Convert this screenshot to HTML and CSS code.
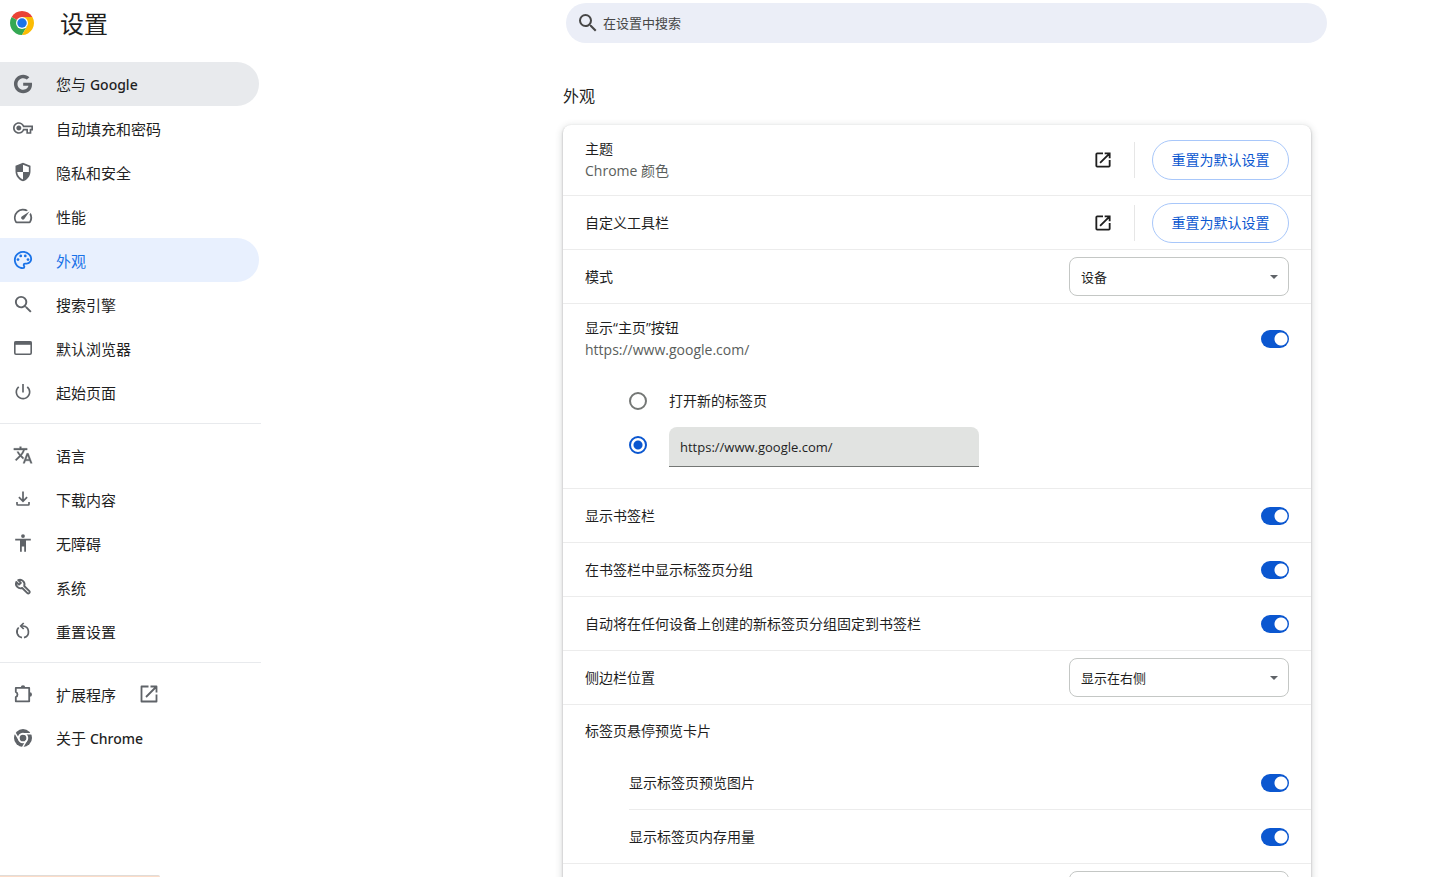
FILE: index.html
```html
<!DOCTYPE html>
<html lang="zh-CN">
<head>
<meta charset="utf-8">
<meta name="viewport" content="width=device-width, initial-scale=1">
<title>设置</title>
<link rel="stylesheet" href="styles.css">
</head>
<body>
<svg class="sprite" aria-hidden="true">
  <symbol id="i-open" viewBox="0 0 24 24"><path d="M12 4H5a1 1 0 0 0-1 1v14a1 1 0 0 0 1 1h14a1 1 0 0 0 1-1v-7M14 4h6v6M20 4 8.500 15.500" fill="none" stroke="currentColor" stroke-width="2.200"/></symbol>
  <symbol id="i-search" viewBox="0 0 24 24"><path fill="currentColor" d="M15.500 14h-.79l-.28-.27A6.470 6.470 0 0 0 16 9.500 6.500 6.500 0 1 0 9.500 16c1.610 0 3.090-.59 4.230-1.570l.27.28v.79l5 4.990L20.490 19l-4.990-5zm-6 0C7.010 14 5 11.990 5 9.500S7.010 5 9.500 5 14 7.010 14 9.500 11.990 14 9.500 14z"/></symbol>
</svg>
<div class="page">
  <aside class="sidebar">
    <div class="brand">
      <svg class="logo" viewBox="0 0 48 48" aria-hidden="true">
        <path fill="#ea4335" d="M24 24 3.220 12A24 24 0 0 1 44.780 12z"/>
        <path fill="#34a853" d="M24 24 3.220 12A24 24 0 0 0 24 48L34.400 30z"/>
        <path fill="#fbbc04" d="M24 12h20.780A24 24 0 0 1 24 48l10.400-18z"/>
        <circle cx="24" cy="24" r="12" fill="#fff"/>
        <circle cx="24" cy="24" r="9.500" fill="#1a73e8"/>
      </svg>
      <h1>设置</h1>
    </div>
    <nav class="menu" aria-label="设置">
      <a class="item hovered" href="#people"><svg class="icon" viewBox="-1 -1 26 26"><path fill="currentColor" d="M12.240 10.285V14.400h6.806c-.275 1.765-2.056 5.174-6.806 5.174-4.095 0-7.439-3.389-7.439-7.574s3.345-7.574 7.439-7.574c2.330 0 3.891.989 4.785 1.849l3.254-3.138C18.189 1.186 15.479 0 12.240 0c-6.635 0-12 5.365-12 12s5.365 12 12 12c6.926 0 11.520-4.869 11.520-11.726 0-.788-.085-1.390-.189-1.989H12.240z"/></svg><span>您与 <span class="latin">Google</span></span></a>
      <a class="item" href="#autofill"><svg class="icon" viewBox="0 0 24 24"><path fill="currentColor" d="M22 19h-6v-4h-2.680c-1.140 2.420-3.600 4-6.320 4-3.860 0-7-3.140-7-7s3.140-7 7-7c2.720 0 5.170 1.580 6.320 4H24v6h-2v4zm-4-2h2v-4h2v-2H11.940l-.23-.67C11.010 8.340 9.110 7 7 7c-2.760 0-5 2.240-5 5s2.240 5 5 5c2.110 0 4.010-1.340 4.710-3.330l.23-.67H18v4zM7 15c-1.650 0-3-1.350-3-3s1.350-3 3-3 3 1.350 3 3-1.350 3-3 3z"/></svg><span>自动填充和密码</span></a>
      <a class="item" href="#privacy"><svg class="icon" viewBox="0 0 24 24"><path fill="currentColor" fill-rule="evenodd" d="M12 1 3 4.500V11c0 5.550 3.840 10.740 9 12 5.160-1.260 9-6.450 9-12V4.500zM12 3.200 19 6v6h-7zM12 12v8.900C8.300 19.700 5.500 16.100 5 12z"/></svg><span>隐私和安全</span></a>
      <a class="item" href="#performance"><svg class="icon" viewBox="1 1 22 22"><path fill="currentColor" d="m20.380 8.570-1.230 1.850a8 8 0 0 1-.22 7.580H5.070A8 8 0 0 1 15.580 6.850l1.850-1.230A10 10 0 0 0 3.350 19a2 2 0 0 0 1.720 1h13.850a2 2 0 0 0 1.740-1 10 10 0 0 0-.27-10.440zm-9.790 6.840a2 2 0 0 0 2.830 0l5.660-8.490-8.490 5.660a2 2 0 0 0 0 2.830z"/></svg><span>性能</span></a>
      <a class="item selected" href="#appearance" aria-current="page"><svg class="icon" viewBox="1 1 22 22"><path fill="currentColor" d="M12 22C6.490 22 2 17.510 2 12S6.490 2 12 2s10 4.040 10 9c0 3.310-2.690 6-6 6h-1.770c-.28 0-.5.22-.5.5 0 .12.05.23.13.33.41.47.64 1.060.64 1.670A2.500 2.500 0 0 1 12 22zm0-18c-4.410 0-8 3.590-8 8s3.590 8 8 8c.28 0 .5-.22.5-.5a.54.54 0 0 0-.14-.35c-.41-.46-.63-1.050-.63-1.650a2.500 2.500 0 0 1 2.500-2.500H16c2.210 0 4-1.790 4-4 0-3.860-3.590-7-8-7z"/><g fill="currentColor"><circle cx="6.500" cy="11.500" r="1.500"/><circle cx="9.500" cy="7.500" r="1.500"/><circle cx="14.500" cy="7.500" r="1.500"/><circle cx="17.500" cy="11.500" r="1.500"/></g></svg><span>外观</span></a>
      <a class="item" href="#search"><svg class="icon" viewBox="1 1 21 21"><path fill="currentColor" d="M15.500 14h-.79l-.28-.27A6.470 6.470 0 0 0 16 9.500 6.500 6.500 0 1 0 9.500 16c1.610 0 3.090-.59 4.230-1.570l.27.28v.79l5 4.990L20.490 19l-4.990-5zm-6 0C7.010 14 5 11.990 5 9.500S7.010 5 9.500 5 14 7.010 14 9.500 11.990 14 9.500 14z"/></svg><span>搜索引擎</span></a>
      <a class="item" href="#default"><svg class="icon" viewBox="0 0 20 20"><rect x="1.800" y="3.800" width="16.400" height="12.400" rx="1.200" fill="none" stroke="currentColor" stroke-width="1.600"/><path d="M1.500 3.500h17v3.300h-17z" fill="currentColor"/></svg><span>默认浏览器</span></a>
      <a class="item" href="#startup"><svg class="icon" viewBox="0 0 24 24"><path fill="currentColor" d="M13 2.500h-2v10h2zm4.830 2.670-1.420 1.420A6.920 6.920 0 0 1 19 12a7 7 0 1 1-11.420-5.420L6.170 5.170A9 9 0 1 0 21 12c0-2.740-1.230-5.180-3.170-6.830z"/></svg><span>起始页面</span></a>
      <hr>
      <a class="item" href="#languages"><svg class="icon" viewBox="0 0 24 24"><path fill="currentColor" stroke="currentColor" stroke-width=".4" d="m12.870 15.070-2.540-2.510.03-.03A17.520 17.520 0 0 0 14.070 6H17V4h-7V2H8v2H1v1.990h11.170C11.500 7.920 10.440 9.750 9 11.350 8.070 10.320 7.300 9.190 6.690 8h-2c.73 1.630 1.730 3.170 2.980 4.560l-5.090 5.020L4 19l5-5 3.110 3.110.76-2.040zM18.500 10h-2L12 22h2l1.120-3h4.750L21 22h2l-4.500-12zm-2.620 7 1.620-4.330L19.120 17h-3.240z"/></svg><span>语言</span></a>
      <a class="item" href="#downloads"><svg class="icon" viewBox="0 0 20 20"><path d="M10 2.500v9.500M5.900 8.200 10 12.300l4.100-4.100M4 13v2.200a.8.8 0 0 0 .8.800h10.400a.8.8 0 0 0 .8-.8V13" fill="none" stroke="currentColor" stroke-width="1.700"/></svg><span>下载内容</span></a>
      <a class="item" href="#a11y"><svg class="icon" viewBox="0 0 20 20"><path fill="currentColor" d="M10 1.200a1.900 1.900 0 1 1 0 3.800 1.900 1.900 0 0 1 0-3.800zM2.200 5.700h15.600v1.700H13v11.400h-1.800v-5.300H8.800v5.300H7V7.400H2.200z"/></svg><span>无障碍</span></a>
      <a class="item" href="#system"><svg class="icon" viewBox="0 0 20 20"><path d="M3.300 5A4.600 4.600 0 0 0 9.200 11l5.200 5.200a1.200 1.200 0 0 0 1.700 0l.3-.3a1.200 1.200 0 0 0 0-1.700L11.200 9A4.600 4.600 0 0 0 5.200 3.100L7.900 5.800 6 7.700z" fill="none" stroke="currentColor" stroke-width="1.900" stroke-linejoin="round"/></svg><span>系统</span></a>
      <a class="item" href="#reset"><svg class="icon" viewBox="0 0 20 20"><path d="M5.700 6.500A5.900 5.900 0 0 0 9 16.600M11 16.600A5.900 5.900 0 0 0 10 5H8" fill="none" stroke="currentColor" stroke-width="1.700"/><path d="M10.700 2 7.700 5l3 3" fill="none" stroke="currentColor" stroke-width="1.700"/></svg><span>重置设置</span></a>
      <hr>
      <a class="item" href="#extensions"><svg class="icon" viewBox="0 0 20 20"><path d="M2.800 3.900h13.400v13.400H2.800V13a2.700 2.700 0 0 0 0-5z" fill="none" stroke="currentColor" stroke-width="1.800" stroke-linejoin="round"/><path fill="currentColor" d="M7.800 3.500a2.200 2.200 0 0 1 4.400 0zM16.800 8.300a2.200 2.200 0 0 1 0 4.400z"/></svg><span>扩展程序</span><svg class="icon" viewBox="0 0 20 20"><path d="M9.500 2.500h-7v15h15v-7M11.500 2.500h6v6M17.500 2.500l-10.500 10.500" fill="none" stroke="currentColor" stroke-width="1.800" stroke-linejoin="round"/></svg></a>
      <a class="item" href="#about"><svg class="icon" viewBox="0 0 20 20"><circle cx="10" cy="10" r="9" fill="currentColor"/><circle cx="10" cy="10" r="4.300" fill="none" stroke="#fff" stroke-width="1.900"/><path d="M10 5.700h8.500M6.300 12.200 2 4.800M13.700 12.200 9.500 19.500" stroke="#fff" stroke-width="1.500"/></svg><span>关于 <span class="latin">Chrome</span></span></a>
    </nav>
  </aside>

  <main class="content">
    <label class="search">
      <svg class="search-icon" viewBox="2 2 20 20"><use href="#i-search" width="24" height="24"/></svg>
      <input type="search" placeholder="在设置中搜索" aria-label="在设置中搜索">
    </label>
    <section class="section">
      <h2>外观</h2>
      <div class="card">
        <div class="row tall">
          <div class="text"><span>主题</span><span class="sub">Chrome 颜色</span></div>
          <a class="open" href="#theme" aria-label="主题"><svg><use href="#i-open"/></svg></a>
          <div class="split"><button class="reset" type="button">重置为默认设置</button></div>
        </div>
        <div class="row">
          <div class="text">自定义工具栏</div>
          <a class="open" href="#toolbar" aria-label="自定义工具栏"><svg><use href="#i-open"/></svg></a>
          <div class="split"><button class="reset" type="button">重置为默认设置</button></div>
        </div>
        <div class="row">
          <label class="text" for="mode">模式</label>
          <div class="select"><select id="mode"><option>设备</option></select><svg viewBox="0 0 8 4"><path d="M0 0h8L4 4z" fill="currentColor"/></svg></div>
        </div>
        <div class="group">
          <div class="row tall">
            <label class="text" for="home"><span>显示“主页”按钮</span><span class="sub">https://www.google.com/</span></label>
            <input class="toggle" id="home" type="checkbox" role="switch" checked>
          </div>
          <div class="radios">
            <label class="radio"><input type="radio" name="homepage">打开新的标签页</label>
            <div class="radio"><input type="radio" name="homepage" aria-label="自定义网址" checked><input class="url" type="text" aria-label="网址" value="https://www.google.com/"></div>
          </div>
        </div>
        <div class="row"><label class="text" for="t1">显示书签栏</label><input class="toggle" id="t1" type="checkbox" role="switch" checked></div>
        <div class="row"><label class="text" for="t2">在书签栏中显示标签页分组</label><input class="toggle" id="t2" type="checkbox" role="switch" checked></div>
        <div class="row"><label class="text" for="t3">自动将在任何设备上创建的新标签页分组固定到书签栏</label><input class="toggle" id="t3" type="checkbox" role="switch" checked></div>
        <div class="row">
          <label class="text" for="side">侧边栏位置</label>
          <div class="select"><select id="side"><option>显示在右侧</option></select><svg viewBox="0 0 8 4"><path d="M0 0h8L4 4z" fill="currentColor"/></svg></div>
        </div>
        <div class="group">
          <div class="row short"><div class="text">标签页悬停预览卡片</div></div>
          <div class="nested">
            <div class="row short"><label class="text" for="t4">显示标签页预览图片</label><input class="toggle" id="t4" type="checkbox" role="switch" checked></div>
            <div class="row"><label class="text" for="t5">显示标签页内存用量</label><input class="toggle" id="t5" type="checkbox" role="switch" checked></div>
          </div>
        </div>
        <div class="row">
          <div class="text"></div>
          <div class="select"><select aria-label="字号"><option></option></select></div>
        </div>
      </div>
    </section>
  </main>
</div>
<div class="status"></div>
</body>
</html>
```
FILE: styles.css
```css
* { box-sizing: border-box; }

body {
  margin: 0;
  height: 100vh;
  overflow: hidden;
  background: #fff;
  color: #1f1f1f;
  font: 14px/20px "Open Sans", "Noto Sans CJK SC", sans-serif;
}

input, select, button { font: inherit; color: inherit; }

.sprite { display: none; }

.page {
  display: grid;
  grid-template-columns: 261px minmax(0, 1fr);
  height: 100%;
}

/* Sidebar */
.brand {
  display: flex;
  align-items: center;
  gap: 26px;
  height: 46px;
  padding-left: 10px;
}
.logo { width: 24px; height: 24px; }
h1 { margin: 0; padding-top: 2px; font-size: 24px; line-height: 32px; font-weight: 400; }

.menu { display: flex; flex-direction: column; padding-top: 16px; }
.item {
  display: flex;
  align-items: center;
  gap: 23px;
  height: 44px;
  margin-right: 2px;
  padding-left: 13px;
  border-radius: 0 22px 22px 0;
  color: #1f1f1f;
  font-size: 15px;
  text-decoration: none;
}
.item > span { padding-top: 1px; }
.latin { font-family: "Noto Sans", sans-serif; font-size: 14px; font-weight: 500; }
.icon { flex: none; width: 20px; height: 20px; color: #5f6368; }
.hovered { background: #e8eaed; }
.selected { background: #e8f0fe; color: #1a73e8; }
.selected .icon { color: #1a73e8; }
hr { width: 100%; margin: 9px 0; border: 0; border-top: 1px solid #e8eaed; }

/* Main column */
.content { height: 100vh; overflow-y: auto; scrollbar-width: none; }

.search {
  display: flex;
  align-items: center;
  gap: 5px;
  height: 40px;
  margin: 3px 122px 0 305px;
  padding: 0 12px;
  border-radius: 20px;
  background: #ebeef7;
  color: #474747;
}
.search-icon { width: 20px; height: 20px; }
.search input {
  flex: 1;
  min-width: 0;
  padding: 0;
  border: 0;
  outline: 0;
  background: none;
  font-size: 13px;
}
.search input::placeholder { color: #474747; opacity: 1; }

.section { padding: 43px 138px 40px 302px; }
h2 { margin: 0 0 18px; font-size: 16px; line-height: 21px; font-weight: 400; }

.card {
  border-radius: 8px;
  box-shadow: 0 1px 2px rgba(60, 64, 67, .4), 0 2px 6px 2px rgba(60, 64, 67, .15);
}
.row {
  display: flex;
  align-items: center;
  min-height: 54px;
  padding: 0 22px;
  border-top: 1px solid #ececec;
}
.row.tall { min-height: 70px; border-top: 0; }
.row.short { min-height: 52px; border-top: 0; }
.text { display: flex; flex-direction: column; gap: 2px; flex: 1; }
.sub { color: #5a5e5b; }
.group { border-top: 1px solid #ececec; }

.open { display: flex; margin-right: 21px; color: #1f1f1f; }
.open svg { width: 20px; height: 20px; }
.split {
  display: flex;
  align-items: center;
  gap: 17px;
}
.split::before { content: ""; width: 1px; height: 36px; background: #e6e6e6; }
.reset {
  width: 137px;
  height: 40px;
  padding: 0;
  border: 1px solid #a8c7fa;
  border-radius: 20px;
  background: #fff;
  color: #0b57d0;
  white-space: nowrap;
}

.select { position: relative; width: 220px; }
.select select {
  display: block;
  width: 100%;
  height: 39px;
  padding: 0 11px;
  border: 1px solid #c4c7c5;
  border-radius: 8px;
  background: #fff;
  font-size: 13px;
  appearance: none;
}
.select svg {
  position: absolute;
  top: 18px;
  right: 11px;
  width: 8px;
  height: 4px;
  color: #5f6368;
  pointer-events: none;
}

.toggle {
  appearance: none;
  width: 28px;
  height: 18px;
  margin: 0;
  border-radius: 9px;
  background: #0b57d0 radial-gradient(circle at 20px 9px, #fff 6px, transparent 7px);
}

.radios { padding: 5px 22px 21px 66px; }
.radio { display: flex; align-items: center; gap: 22px; min-height: 44px; }
.radio input[type="radio"] {
  appearance: none;
  flex: none;
  width: 18px;
  height: 18px;
  margin: 0;
  border: 2px solid #747775;
  border-radius: 50%;
}
.radio input[type="radio"]:checked {
  border-color: #0b57d0;
  background: radial-gradient(circle, #0b57d0 4px, transparent 5px);
}
.url {
  align-self: flex-end;
  width: 310px;
  height: 40px;
  padding: 0 11px;
  border: 0;
  border-bottom: 1px solid #747775;
  border-radius: 8px 8px 0 0;
  background: #e1e3e1;
  font-size: 13px;
}

.nested { margin-left: 66px; }
.nested .row { padding-left: 0; }

/* Link status bubble, peeking from the bottom edge */
.status {
  position: fixed;
  bottom: 0;
  left: 0;
  width: 160px;
  height: 2px;
  border-top: 1px solid #e0dcd8;
  border-radius: 0 2px 0 0;
  background: #fcdcc8;
}
```
